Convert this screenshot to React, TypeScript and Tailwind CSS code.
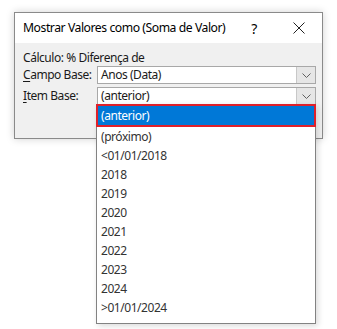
const ITEMS = ['(próximo)', '<01/01/2018', '2018', '2019', '2020', '2021', '2022', '2023', '2024', '>01/01/2024'];

function Chevron() {
  return (
    <svg width="9" height="5" viewBox="0 0 9 5" fill="none">
      <path d="M0.5 0.5 L4.5 4.5 L8.5 0.5" stroke="#606060" strokeWidth="1" />
    </svg>
  );
}

function Combo({ value }: { value: string }) {
  return (
    <div className="flex h-[18px] w-[219px] items-stretch border border-[#a8a8a8] bg-white">
      <div className="flex-1 pl-[3px] leading-[16px]">{value}</div>
      <div className="flex w-[19px] items-center justify-center border-l border-[#c8c8c8] bg-[#e6e6e6]">
        <Chevron />
      </div>
    </div>
  );
}

export default function App() {
  return (
    <div
      className="relative h-[329px] w-[337px] overflow-hidden bg-white pl-[14px] pt-[12px] text-[12px] tracking-[-0.45px] text-[#1a1a1a]"
      style={{ fontFamily: '"Noto Sans", "Open Sans", sans-serif' }}
    >
      <div className="h-[127px] w-[309px] border border-[#8a8a8a] bg-[#f0f0f0] shadow-[0_0_8px_rgba(0,0,0,0.18)]">
        {/* Title bar */}
        <div className="flex h-[30px] items-center bg-white pl-[8px] text-[12.2px] text-black">
          <span className="flex-1 whitespace-nowrap">Mostrar Valores como (Soma de Valor)</span>
          <span className="mr-[36px] text-[14px]">?</span>
          <svg className="mr-[17px]" width="12" height="12" viewBox="0 0 12 12">
            <path d="M0.5 0.5 L11.5 11.5 M11.5 0.5 L0.5 11.5" stroke="#222" strokeWidth="1" />
          </svg>
        </div>
        {/* Body */}
        <div className="pl-[8px] pt-[7px]">
          <div className="leading-[16px]">Cálculo: % Diferença de</div>
          <div className="flex items-center">
            <span className="w-[74px] whitespace-nowrap"><span className="underline underline-offset-2">C</span>ampo Base:</span>
            <Combo value="Anos (Data)" />
          </div>
          <div className="mt-[3px] flex items-center">
            <span className="w-[74px] whitespace-nowrap"><span className="underline underline-offset-2">I</span>tem Base:</span>
            <Combo value="(anterior)" />
          </div>
        </div>
      </div>

      {/* Open dropdown list */}
      <div className="absolute left-[96px] top-[104px] h-[220px] w-[220px] border border-[#828282] bg-white text-[#333] shadow-[2px_2px_6px_rgba(0,0,0,0.15)]">
        <div className="-mx-px -mt-px flex h-[23px] items-center border-2 border-[#e0202a] bg-[#0078d7] pl-[3px] text-white">
          (anterior)
        </div>
        {ITEMS.map((t) => (
          <div key={t} className="flex h-[19px] items-center pl-[4px]">
            {t}
          </div>
        ))}
      </div>
    </div>
  );
}
